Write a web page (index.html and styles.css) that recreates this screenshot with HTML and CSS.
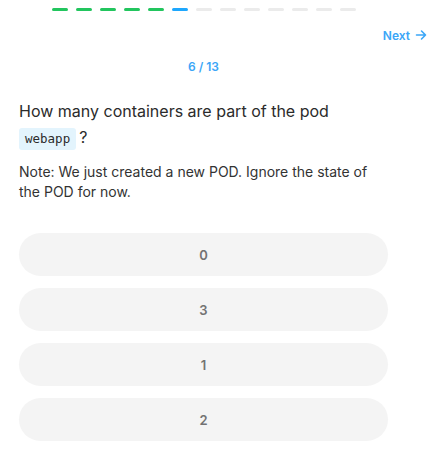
FILE: index.html
```html
<!DOCTYPE html>
<html lang="en">
<head>
    <meta charset="UTF-8">
    <meta name="viewport" content="width=device-width, initial-scale=1.0">
    <title>Quiz</title>
    <link rel="stylesheet" href="styles.css">
</head>
<body>
    <div class="quiz">
        <div class="progress">
            <span class="step done"></span>
            <span class="step done"></span>
            <span class="step done"></span>
            <span class="step done"></span>
            <span class="step done"></span>
            <span class="step current"></span>
            <span class="step"></span>
            <span class="step"></span>
            <span class="step"></span>
            <span class="step"></span>
            <span class="step"></span>
            <span class="step"></span>
            <span class="step"></span>
        </div>
        <div class="nav">
            <button class="next-button">Next
                <svg width="12" height="12" viewBox="0 0 12 12" fill="none" stroke="currentColor" stroke-width="1.6" stroke-linecap="round" stroke-linejoin="round"><path d="M1.5 6h9M6.5 2l4 4-4 4"/></svg>
            </button>
        </div>
        <div class="counter">6 / 13</div>
        <div class="question">
            How many containers are part of the pod <code>webapp</code>?
        </div>
        <p class="note">Note: We just created a new POD. Ignore the state of the POD for now.</p>
        <div class="options">
            <button class="option">0</button>
            <button class="option">3</button>
            <button class="option">1</button>
            <button class="option">2</button>
        </div>
    </div>
</body>
</html>
```

FILE: styles.css
```css
* {
    box-sizing: border-box;
    margin: 0;
    padding: 0;
}
body {
    font-family: Inter, 'Noto Sans', sans-serif;
    background-color: #fff;
    color: #333;
}
.quiz {
    width: 434px;
    padding: 8px 46px 0 19px;
}
.progress {
    display: flex;
    justify-content: center;
    gap: 8px;
    height: 3px;
}
.step {
    width: 16px;
    height: 3px;
    border-radius: 2px;
    background-color: #ebebeb;
}
.step.done {
    background-color: #22c55e;
}
.step.current {
    background-color: #1ea7fd;
}
.nav {
    display: flex;
    justify-content: flex-end;
    margin-right: -39px;
    margin-top: 16px;
    height: 16px;
}
.next-button {
    display: flex;
    align-items: center;
    gap: 5px;
    background: none;
    border: none;
    color: #3ba6f7;
    font-family: Inter, sans-serif;
    font-size: 12px;
    font-weight: 600;
    cursor: pointer;
}
.counter {
    text-align: center;
    margin-top: 16px;
    color: #3ba6f7;
    font-size: 12px;
    font-weight: 600;
    line-height: 16px;
}
.question {
    margin-top: 23px;
    padding-right: 20px;
    font-size: 16px;
    line-height: 26px;
    color: #2b2b2b;
}
.question code {
    display: inline-block;
    font-family: 'DejaVu Sans Mono', monospace;
    font-size: 12.5px;
    line-height: 22px;
    background-color: #e3f4fd;
    padding: 0 6px;
    border-radius: 3px;
    margin-right: 3px;
}
.note {
    margin-top: 12px;
    font-size: 14px;
    line-height: 20px;
    color: #333;
}
.options {
    display: flex;
    flex-direction: column;
    gap: 12px;
    margin-top: 31px;
}
.option {
    height: 43px;
    border: none;
    border-radius: 22px;
    background-color: #f4f4f4;
    color: #727272;
    font-family: Inter, sans-serif;
    font-size: 13px;
    font-weight: 600;
    cursor: pointer;
}
```
